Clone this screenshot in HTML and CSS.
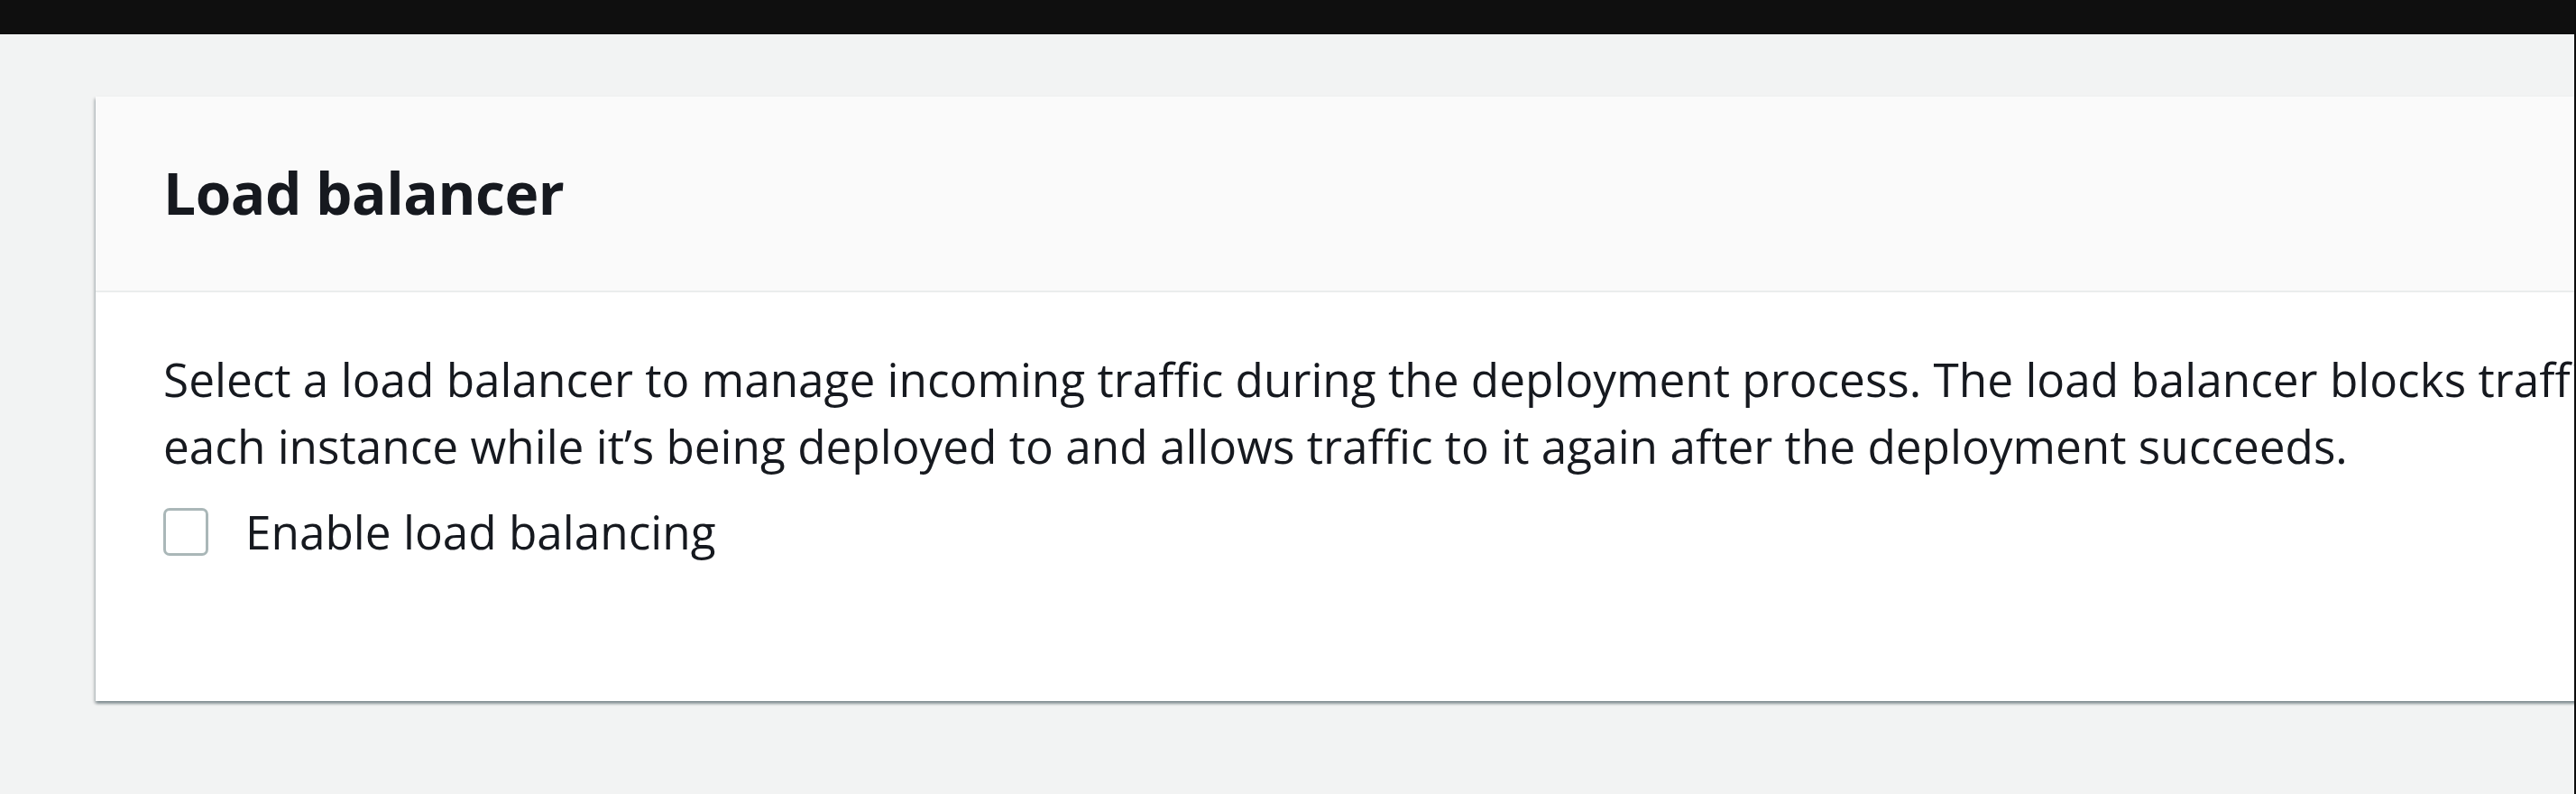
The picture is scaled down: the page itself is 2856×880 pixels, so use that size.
FILE: index.html
```html
<!DOCTYPE html>
<html lang="en">
<head>
<meta charset="utf-8">
<title>Load balancer</title>
<link rel="stylesheet" href="styles.css">
</head>
<body>
<div class="page">
  <div class="topbar"></div>
  <main class="content">
    <section class="card">
      <header class="card-header">
        <h2 class="card-title">Load balancer</h2>
      </header>
      <div class="card-body">
        <p class="desc">Select a load balancer to manage incoming traffic during the deployment process. The load balancer blocks traffic to<br>each instance while it’s being deployed to and allows traffic to it again after the deployment succeeds.</p>
        <label class="check-row">
          <span class="checkbox"></span>
          <span class="check-label">Enable load balancing</span>
        </label>
      </div>
    </section>
  </main>
</div>
</body>
</html>
```

FILE: styles.css
```css
html, body {
  margin: 0;
  padding: 0;
  height: 100%;
  background: #0d0d0d;
  overflow: hidden;
}

.page {
  width: 2854px;
  height: 880px;
  background: #f2f3f3;
  overflow: hidden;
  font-family: "Open Sans", "Liberation Sans", sans-serif;
  color: #16191f;
  display: flex;
  flex-direction: column;
}

.topbar {
  height: 38px;
  background: #0f0f0f;
  flex-shrink: 0;
}

.content {
  padding: 69px 0 0 106px;
  display: flex;
}

.card {
  width: 3000px;
  flex-shrink: 0;
  background: #ffffff;
  box-shadow: 0 3px 3px 0 rgba(0, 28, 36, 0.3), 2px 2px 3px 0 rgba(0, 28, 36, 0.15), -2px 2px 3px 0 rgba(0, 28, 36, 0.15);
}

.card-header {
  background: #fafafa;
  border-bottom: 2px solid #eaeded;
  padding: 67px 75px 68px;
}

.card-title {
  margin: 0;
  font-size: 64px;
  line-height: 80px;
  font-weight: 700;
  letter-spacing: -0.5px;
  color: #16191f;
}

.card-body {
  padding: 59px 75px 151px;
  display: flex;
  flex-direction: column;
  gap: 21px;
}

.desc {
  margin: 0;
  font-size: 51.3px;
  line-height: 74px;
  white-space: nowrap;
}

.check-row {
  display: flex;
  align-items: center;
  gap: 41px;
  font-size: 51.3px;
  line-height: 74px;
}

.checkbox {
  width: 44px;
  height: 47px;
  border: 3px solid #aab7b8;
  border-radius: 7px;
  background: #ffffff;
  flex-shrink: 0;
}
```
